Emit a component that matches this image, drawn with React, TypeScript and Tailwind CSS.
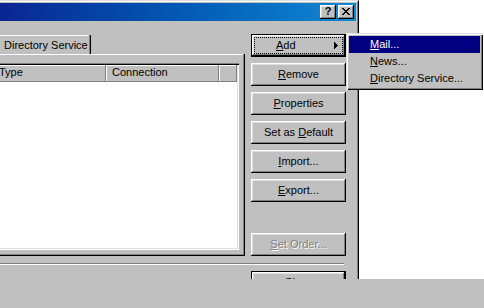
import React from "react"

const raised =
  "shadow-[inset_-1px_-1px_#000,inset_1px_1px_#fff,inset_-2px_-2px_#808080,inset_2px_2px_#dfdfdf]"

function Btn({ children, disabled }: { children: React.ReactNode; disabled?: boolean }) {
  return (
    <div
      className={`flex h-[23px] w-[95px] items-center justify-center bg-[#c0c0c0] leading-[13px] ${raised} ${
        disabled ? "text-[#808080] [text-shadow:1px_1px_0_#fff]" : "text-black"
      }`}
    >
      {children}
    </div>
  )
}

function HeaderCell({ children, className }: { children?: React.ReactNode; className: string }) {
  return (
    <div
      className={`h-[17px] bg-[#c0c0c0] leading-[15px] shadow-[inset_-1px_-1px_#808080,inset_1px_1px_#fff] ${className}`}
    >
      {children}
    </div>
  )
}

export default function App() {
  return (
    <div className="relative h-[308px] w-[484px] overflow-hidden bg-white text-[11px] text-black [font-family:'Liberation_Sans',Arial,sans-serif]">
      <div className="flex h-[279px]">
        {/* window, its lower part is covered by the bar below */}
        <div className="h-[279px] w-[359px] overflow-hidden border-r border-t border-r-black border-t-[#dfdfdf]">
          <div className="h-full border-r border-t border-r-[#808080] border-t-white bg-[#c0c0c0] pr-px pt-px">
            {/* title bar */}
            <div className="flex h-[18px] items-center justify-end gap-[2px] bg-linear-to-r from-[#0b2592] to-[#1288d3] pr-[2px]">
              <div className={`flex h-[14px] w-[16px] items-center justify-center bg-[#c0c0c0] pb-px text-[11px] font-bold leading-none ${raised}`}>
                ?
              </div>
              <div className={`flex h-[14px] w-[16px] items-center justify-center bg-[#c0c0c0] pb-px ${raised}`}>
                <svg width="8" height="7" viewBox="0 0 8 7" shapeRendering="crispEdges">
                  <path
                    d="M0 0h2v1H0zM6 0h2v1H6zM1 1h2v1H1zM5 1h2v1H5zM2 2h4v1H2zM3 3h2v1H3zM2 4h4v1H2zM1 5h2v1H1zM5 5h2v1H5zM0 6h2v1H0zM6 6h2v1H6z"
                    fill="#000"
                  />
                </svg>
              </div>
            </div>

            {/* content */}
            <div className="flex flex-col pr-[10px]">
              <div className="flex h-[235px]">
                {/* tab + page */}
                <div className="flex w-[245px] flex-col pt-[14px]">
                  <div className="h-[19px] w-[91px] rounded-tr-[1px] pl-[4px] pt-[4px] leading-[13px] shadow-[inset_-1px_0_#000,inset_-2px_0_#808080,inset_0_1px_#fff]">
                    Directory Service
                  </div>
                  <div className="flex flex-1 flex-col pb-[6px] pr-[6px] pt-[9px] shadow-[inset_-1px_-1px_#000,inset_-2px_-2px_#808080,inset_0_1px_#fff]">
                    <div className="-ml-[10px] flex flex-1 flex-col bg-white p-[2px] shadow-[inset_1px_1px_#808080,inset_2px_2px_#000,inset_-1px_-1px_#fff,inset_-2px_-2px_#dfdfdf]">
                      <div className="flex">
                        <HeaderCell className="w-[114px] pl-[7px]">Type</HeaderCell>
                        <HeaderCell className="w-[113px] pl-[6px]">Connection</HeaderCell>
                        <HeaderCell className="flex-1" />
                      </div>
                    </div>
                  </div>
                </div>

                {/* buttons */}
                <div className="ml-[6px] flex w-[95px] flex-col gap-[6px] pt-[13px]">
                  <div className="h-[23px] w-[95px] border border-black bg-[#c0c0c0]">
                    <div className={`h-full p-[2px] ${raised}`}>
                      <div className="flex h-full items-center border border-dotted border-black pl-[21px] pr-[4px] leading-[13px]">
                        <span>
                          <u>A</u>dd
                        </span>
                        <svg className="ml-auto" width="4" height="7" viewBox="0 0 4 7" shapeRendering="crispEdges">
                          <path d="M0 0h1v7H0zM1 1h1v5H1zM2 2h1v3H2zM3 3h1v1H3z" fill="#000" />
                        </svg>
                      </div>
                    </div>
                  </div>
                  <Btn>
                    <span>
                      <u>R</u>emove
                    </span>
                  </Btn>
                  <Btn>
                    <span>
                      <u>P</u>roperties
                    </span>
                  </Btn>
                  <Btn>
                    <span>
                      Set as <u>D</u>efault
                    </span>
                  </Btn>
                  <Btn>
                    <span>
                      <u>I</u>mport...
                    </span>
                  </Btn>
                  <Btn>
                    <span>
                      <u>E</u>xport...
                    </span>
                  </Btn>
                  <div className="mt-auto">
                    <Btn disabled>
                      <span>
                        <u>S</u>et Order...
                      </span>
                    </Btn>
                  </div>
                </div>
              </div>

              <div className="mt-[7px] h-[2px] w-[344px] border-b border-t border-b-white border-t-[#808080]" />

              <div className="ml-[251px] mt-[6px] h-[23px] w-[95px] border border-black bg-[#c0c0c0]">
                <div className={`flex h-full items-center justify-center leading-[13px] ${raised}`}>Close</div>
              </div>
            </div>
          </div>
        </div>
      </div>

      <div className="h-[29px] w-full bg-[#c0c0c0]" />

      {/* submenu */}
      <div className="absolute left-[346px] top-[33px] h-[57px] w-[137px] bg-[#c0c0c0] p-[3px] shadow-[inset_1px_1px_#dfdfdf,inset_2px_2px_#fff,inset_-1px_-1px_#000,inset_-2px_-2px_#808080]">
        <div className="h-[17px] bg-[#000080] pl-[21px] leading-[17px] text-white">
          <u>M</u>ail...
        </div>
        <div className="h-[17px] pl-[21px] leading-[17px]">
          <u>N</u>ews...
        </div>
        <div className="h-[17px] pl-[21px] leading-[17px]">
          <u>D</u>irectory Service...
        </div>
      </div>
    </div>
  )
}
